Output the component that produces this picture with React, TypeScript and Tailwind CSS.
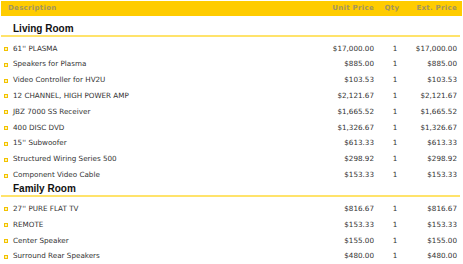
import React from "react"

type Item = { name: string; price: string; qty: number; ext: string }
type Section = { title: string; items: Item[] }

const sections: Section[] = [
  {
    title: "Living Room",
    items: [
      { name: "61'' PLASMA", price: "$17,000.00", qty: 1, ext: "$17,000.00" },
      { name: "Speakers for Plasma", price: "$885.00", qty: 1, ext: "$885.00" },
      { name: "Video Controller for HV2U", price: "$103.53", qty: 1, ext: "$103.53" },
      { name: "12 CHANNEL, HIGH POWER AMP", price: "$2,121.67", qty: 1, ext: "$2,121.67" },
      { name: "JBZ 7000 SS Receiver", price: "$1,665.52", qty: 1, ext: "$1,665.52" },
      { name: "400 DISC DVD", price: "$1,326.67", qty: 1, ext: "$1,326.67" },
      { name: "15'' Subwoofer", price: "$613.33", qty: 1, ext: "$613.33" },
      { name: "Structured Wiring Series 500", price: "$298.92", qty: 1, ext: "$298.92" },
      { name: "Component Video Cable", price: "$153.33", qty: 1, ext: "$153.33" },
    ],
  },
  {
    title: "Family Room",
    items: [
      { name: "27'' PURE FLAT TV", price: "$816.67", qty: 1, ext: "$816.67" },
      { name: "REMOTE", price: "$153.33", qty: 1, ext: "$153.33" },
      { name: "Center Speaker", price: "$155.00", qty: 1, ext: "$155.00" },
      { name: "Surround Rear Speakers", price: "$480.00", qty: 1, ext: "$480.00" },
    ],
  },
]

export default function App() {
  return (
    <div className="w-[463px] h-[264px] overflow-hidden bg-white p-[1px] font-['DejaVu_Sans',sans-serif]">
      <div className="flex h-[15px] items-center bg-[#ffcc00] pr-[5px] text-[7px] font-bold tracking-[0.3px] text-[#a3955f]">
        <div className="flex-1 pl-[7px]">Description</div>
        <div className="w-[60px] text-right">Unit Price</div>
        <div className="w-[36px] text-center">Qty</div>
        <div className="w-[47px] text-right">Ext. Price</div>
      </div>

      {sections.map((section, i) => (
        <section key={section.title} className="mr-[2px]">
          <div
            className={
              i === 0
                ? "mt-[7px] h-[12px] pl-[12px] font-['Liberation_Sans',sans-serif] text-[10px] font-bold leading-[12px] text-[#111]"
                : "mt-0 h-[12px] pl-[12px] font-['Liberation_Sans',sans-serif] text-[10px] font-bold leading-[12px] text-[#111]"
            }
          >
            {section.title}
          </div>
          <div className="h-[2px] bg-[#ffe36b]" />
          <div className="pt-[4px]">
            {section.items.map((item) => (
              <div
                key={item.name}
                className="flex h-[15.84px] items-center pr-[3px] text-[7.2px] text-[#333]"
              >
                <span className="ml-[3px] mr-[5px] box-border size-[4px] border border-[#f2c200] bg-[#fff3b0]" />
                <span className="flex-1">{item.name}</span>
                <span className="w-[60px] text-right">{item.price}</span>
                <span className="w-[36px] pl-[6px] text-center">{item.qty}</span>
                <span className="w-[47px] text-right">{item.ext}</span>
              </div>
            ))}
          </div>
        </section>
      ))}
    </div>
  )
}
